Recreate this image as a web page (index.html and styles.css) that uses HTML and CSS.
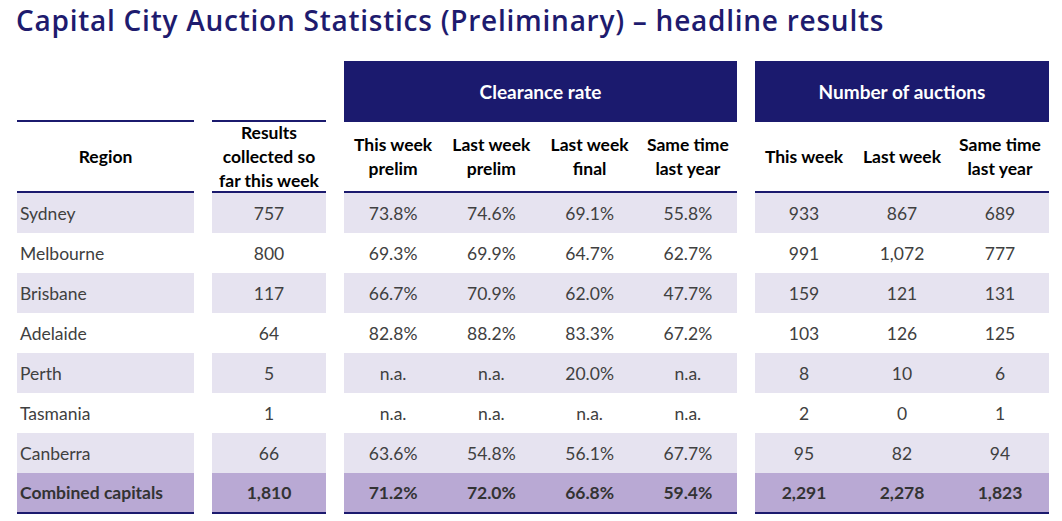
FILE: index.html
```html
<!DOCTYPE html>
<html lang="en">
<head>
<meta charset="utf-8">
<title>Capital City Auction Statistics</title>
<link rel="stylesheet" href="styles.css">
</head>
<body>
<h1 class="title">Capital City Auction Statistics (Preliminary) – headline results</h1>
<div class="table">
  <div class="group g-region">
    <div class="head"><div class="hc left">Region</div></div>
    <div class="row shade"><div class="c left">Sydney</div></div>
    <div class="row"><div class="c left">Melbourne</div></div>
    <div class="row shade"><div class="c left">Brisbane</div></div>
    <div class="row"><div class="c left">Adelaide</div></div>
    <div class="row shade"><div class="c left">Perth</div></div>
    <div class="row"><div class="c left">Tasmania</div></div>
    <div class="row shade"><div class="c left">Canberra</div></div>
    <div class="row total"><div class="c left">Combined capitals</div></div>
  </div>
  <div class="group g-results">
    <div class="head"><div class="hc">Results<br>collected so<br>far this week</div></div>
    <div class="row shade"><div class="c">757</div></div>
    <div class="row"><div class="c">800</div></div>
    <div class="row shade"><div class="c">117</div></div>
    <div class="row"><div class="c">64</div></div>
    <div class="row shade"><div class="c">5</div></div>
    <div class="row"><div class="c">1</div></div>
    <div class="row shade"><div class="c">66</div></div>
    <div class="row total"><div class="c">1,810</div></div>
  </div>
  <div class="group g-clear">
    <div class="band">Clearance rate</div>
    <div class="head">
      <div class="hc">This week<br>prelim</div>
      <div class="hc">Last week<br>prelim</div>
      <div class="hc">Last week<br>final</div>
      <div class="hc">Same time<br>last year</div>
    </div>
    <div class="row shade"><div class="c">73.8%</div><div class="c">74.6%</div><div class="c">69.1%</div><div class="c">55.8%</div></div>
    <div class="row"><div class="c">69.3%</div><div class="c">69.9%</div><div class="c">64.7%</div><div class="c">62.7%</div></div>
    <div class="row shade"><div class="c">66.7%</div><div class="c">70.9%</div><div class="c">62.0%</div><div class="c">47.7%</div></div>
    <div class="row"><div class="c">82.8%</div><div class="c">88.2%</div><div class="c">83.3%</div><div class="c">67.2%</div></div>
    <div class="row shade"><div class="c">n.a.</div><div class="c">n.a.</div><div class="c">20.0%</div><div class="c">n.a.</div></div>
    <div class="row"><div class="c">n.a.</div><div class="c">n.a.</div><div class="c">n.a.</div><div class="c">n.a.</div></div>
    <div class="row shade"><div class="c">63.6%</div><div class="c">54.8%</div><div class="c">56.1%</div><div class="c">67.7%</div></div>
    <div class="row total"><div class="c">71.2%</div><div class="c">72.0%</div><div class="c">66.8%</div><div class="c">59.4%</div></div>
  </div>
  <div class="group g-num">
    <div class="band">Number of auctions</div>
    <div class="head">
      <div class="hc">This week</div>
      <div class="hc">Last week</div>
      <div class="hc">Same time<br>last year</div>
    </div>
    <div class="row shade"><div class="c">933</div><div class="c">867</div><div class="c">689</div></div>
    <div class="row"><div class="c">991</div><div class="c">1,072</div><div class="c">777</div></div>
    <div class="row shade"><div class="c">159</div><div class="c">121</div><div class="c">131</div></div>
    <div class="row"><div class="c">103</div><div class="c">126</div><div class="c">125</div></div>
    <div class="row shade"><div class="c">8</div><div class="c">10</div><div class="c">6</div></div>
    <div class="row"><div class="c">2</div><div class="c">0</div><div class="c">1</div></div>
    <div class="row shade"><div class="c">95</div><div class="c">82</div><div class="c">94</div></div>
    <div class="row total"><div class="c">2,291</div><div class="c">2,278</div><div class="c">1,823</div></div>
  </div>
</div>
</body>
</html>
```
FILE: styles.css
```css
* { box-sizing: border-box; }
body {
  margin: 0;
  background: #ffffff;
  font-family: "Lato", "Liberation Sans", sans-serif;
}
.title {
  margin: 0;
  padding: 1px 0 0 16px;
  height: 61px;
  font-family: "Open Sans", "Liberation Sans", sans-serif;
  font-weight: 600;
  font-size: 28px;
  letter-spacing: 0.75px;
  line-height: 38px;
  color: #1e1b6e;
  white-space: nowrap;
}
.table {
  display: flex;
  align-items: flex-end;
  gap: 18px;
  padding-left: 17px;
}
.group {
  display: flex;
  flex-direction: column;
  flex: none;
  border-bottom: 2px solid #1b1a6e;
}
.g-region { width: 177px; }
.g-results { width: 114px; }
.g-clear { width: 393px; }
.g-num { width: 294px; }
.band {
  height: 61px;
  background: #1b1a6e;
  color: #ffffff;
  font-weight: 700;
  font-size: 19px;
  display: flex;
  align-items: center;
  justify-content: center;
}
.head {
  display: flex;
  height: 71px;
  border-bottom: 2px solid #1b1a6e;
}
.g-region .head, .g-results .head {
  border-top: 2px solid #1b1a6e;
  height: 73px;
}
.hc {
  flex: 1;
  display: flex;
  align-items: center;
  justify-content: center;
  text-align: center;
  font-weight: 700;
  font-size: 17.5px;
  line-height: 24px;
  color: #000000;
}
.row {
  display: flex;
  height: 40px;
}
.row.shade { background: #e6e3f0; }
.row.total { background: #b9a9d4; height: 39px; }
.c {
  flex: 1;
  display: flex;
  align-items: center;
  justify-content: center;
  font-size: 17.5px;
  color: #404040;
}
.total .c { font-weight: 700; color: #333333; }
.c.left { justify-content: flex-start; padding-left: 3px; }
```
